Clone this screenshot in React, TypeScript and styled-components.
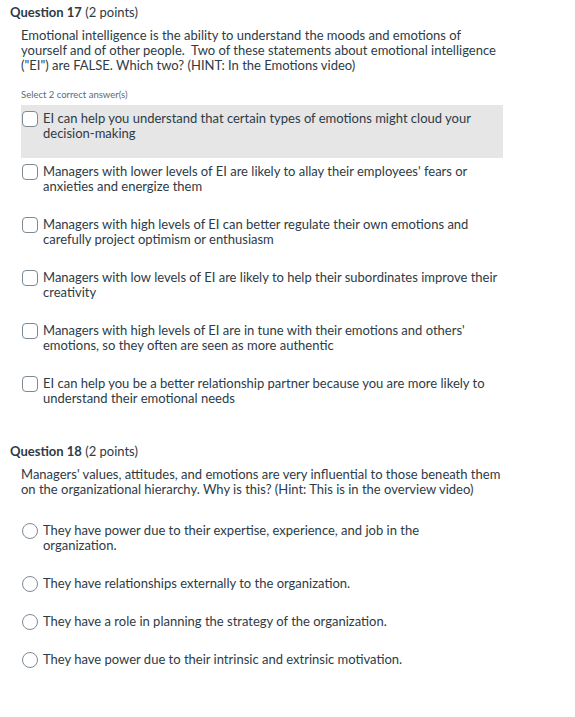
import React from "react";
import styled, { createGlobalStyle } from "styled-components";

const GlobalStyle = createGlobalStyle`
  body {
    margin: 0;
    background: #ffffff;
    font-family: Lato, "Open Sans", sans-serif;
    color: #2d3b45;
  }
`;

interface Question {
  number: number;
  points: number;
  text: string;
  hint?: string;
  kind: "checkbox" | "radio";
  options: string[];
  optionWidth: number;
  highlighted?: number;
}

const questions: Question[] = [
  {
    number: 17,
    points: 2,
    text: "Emotional intelligence is the ability to understand the moods and emotions of yourself and of other people.\u00a0 Two of these statements about emotional intelligence (\"EI\") are FALSE. Which two? (HINT: In the Emotions video)",
    hint: "Select 2 correct answer(s)",
    kind: "checkbox",
    highlighted: 0,
    optionWidth: 482,
    options: [
      "EI can help you understand that certain types of emotions might cloud your decision-making",
      "Managers with lower levels of EI are likely to allay their employees' fears or anxieties and energize them",
      "Managers with high levels of EI can better regulate their own emotions and carefully project optimism or enthusiasm",
      "Managers with low levels of EI are likely to help their subordinates improve their creativity",
      "Managers with high levels of EI are in tune with their emotions and others' emotions, so they often are seen as more authentic",
      "EI can help you be a better relationship partner because you are more likely to understand their emotional needs",
    ],
  },
  {
    number: 18,
    points: 2,
    text: "Managers' values, attitudes, and emotions are very influential to those beneath them on the organizational hierarchy. Why is this? (Hint: This is in the overview video)",
    kind: "radio",
    optionWidth: 440,
    options: [
      "They have power due to their expertise, experience, and job in the organization.",
      "They have relationships externally to the organization.",
      "They have a role in planning the strategy of the organization.",
      "They have power due to their intrinsic and extrinsic motivation.",
    ],
  },
];

const Page = styled.div`
  padding: 5px 0 0 10px;
  width: 565px;
`;

const QuestionBlock = styled.section`
  margin-bottom: 21px;
`;

const Title = styled.h2`
  margin: 0;
  font-size: 13px;
  line-height: 15px;
  font-weight: 400;
  color: #2d3b45;
  b {
    font-weight: 700;
  }
`;

const Body = styled.div`
  margin: 8px 0 0 11px;
  width: 482px;
`;

const Prompt = styled.p`
  margin: 0;
  font-size: 13px;
  line-height: 15px;
`;

const Hint = styled.div`
  margin-top: 16px;
  font-size: 9.5px;
  line-height: 12px;
  color: #5c6a75;
`;

const Options = styled.div<{ $gap: number; $width: number }>`
  margin-top: ${(p) => p.$gap}px;
  width: ${(p) => p.$width}px;
  display: flex;
  flex-direction: column;
`;

const Option = styled.label<{ $active?: boolean }>`
  display: flex;
  align-items: flex-start;
  gap: 5px;
  padding: 6px 0 17px 1px;
  background: ${(p) => (p.$active ? "#e6e6e6" : "transparent")};
  font-size: 13px;
  line-height: 15px;
`;

const Marker = styled.span<{ $round: boolean }>`
  flex: 0 0 auto;
  box-sizing: border-box;
  width: 16px;
  height: 16px;
  margin-bottom: -1px;
  border: 1px solid #7d8a94;
  border-radius: ${(p) => (p.$round ? "50%" : "4px")};
  background: #ffffff;
`;

const OptionText = styled.span`
  flex: 1;
  padding-right: 4px;
`;

export default function App() {
  return (
    <Page>
      <GlobalStyle />
      {questions.map((q) => (
        <QuestionBlock key={q.number}>
          <Title>
            <b>Question {q.number}</b> ({q.points} points)
          </Title>
          <Body>
            <Prompt>{q.text}</Prompt>
            {q.hint && <Hint>{q.hint}</Hint>}
            <Options $gap={q.hint ? 4 : 20} $width={q.optionWidth}>
              {q.options.map((o, i) => (
                <Option key={i} $active={q.highlighted === i}>
                  <Marker $round={q.kind === "radio"} />
                  <OptionText>{o}</OptionText>
                </Option>
              ))}
            </Options>
          </Body>
        </QuestionBlock>
      ))}
    </Page>
  );
}
